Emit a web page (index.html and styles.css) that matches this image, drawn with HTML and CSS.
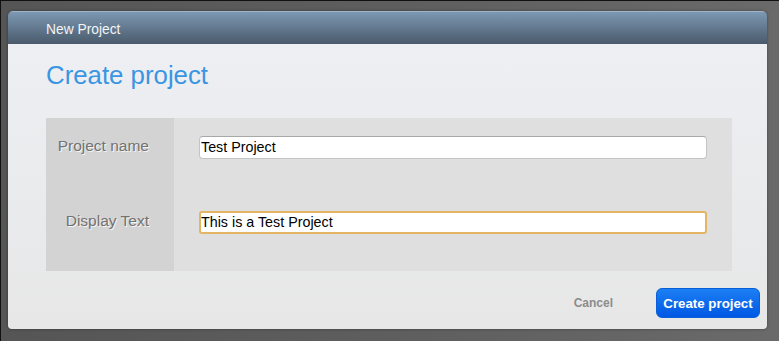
FILE: index.html
```html
<!DOCTYPE html>
<html lang="en">
<head>
  <meta charset="UTF-8" />
  <title>New Project</title>
  <link rel="stylesheet" href="styles.css">
</head>
<body>
  <div class="dialog">
    <div class="dialog-header">New Project</div>
    <div class="dialog-body">
      <h1>Create project</h1>
      <form class="form-panel">
        <label class="field-label" for="projectName">Project name</label>
        <div class="field"><input id="projectName" type="text" value="Test Project"></div>
        <label class="field-label" for="displayText">Display Text</label>
        <div class="field"><input id="displayText" class="focused" type="text" value="This is a Test Project"></div>
      </form>
      <div class="actions">
        <a href="#" class="cancel-btn">Cancel</a>
        <button class="create-btn">Create project</button>
      </div>
    </div>
  </div>
</body>
</html>
```

FILE: styles.css
```css
html, body {
  margin: 0;
  padding: 0;
  height: 100%;
}
body {
  background: linear-gradient(90deg, #555 0, #5e5e5e 50%, #6a6a6a 100%);
  border-top: 1px solid #111;
  border-left: 1px solid #111;
  box-sizing: border-box;
  font-family: 'Liberation Sans', Arial, sans-serif;
  overflow: hidden;
}
.dialog {
  margin: 10px 0 0 7px;
  width: 759px;
  height: 318px;
  border-radius: 5px 5px 4px 4px;
  overflow: hidden;
  display: flex;
  flex-direction: column;
  box-shadow: 0 0 3px rgba(0, 0, 0, 0.4);
}
.dialog-header {
  height: 33px;
  padding-left: 38px;
  line-height: 35px;
  font-size: 13.8px;
  color: #f2f4f6;
  background: linear-gradient(#7c98b3, #4a5a6b);
  border-top: 1px solid #9fb4c8;
  box-sizing: border-box;
}
.dialog-body {
  flex: 1;
  padding: 0 35px 0 38px;
  background: linear-gradient(#edeff3, #e7e7e7);
}
h1 {
  margin: 17px 0 0;
  font-size: 25.8px;
  font-weight: normal;
  line-height: 28px;
  color: #3a95e2;
}
.form-panel {
  margin: 29px 0 0;
  display: grid;
  grid-template-columns: 128px 1fr;
  grid-template-rows: 58px 92px;
  padding-bottom: 3px;
  background: linear-gradient(90deg, #d3d3d3 128px, #dfdfdf 128px);
}
.field-label {
  align-self: center;
  text-align: right;
  padding: 0 25px 3px 0;
  font-size: 15.5px;
  color: #727272;
  text-shadow: 1px 1px 0 #f4f4f4;
}
.field {
  align-self: center;
  padding: 0 25px;
}
.field input {
  display: block;
  width: 100%;
  height: 23px;
  box-sizing: border-box;
  margin: 0;
  padding: 0 1px;
  font-family: 'Liberation Sans', Arial, sans-serif;
  font-size: 14.3px;
  color: #000;
  background: #fff;
  border: 1px solid #c4c4c4;
  border-top-color: #a8a8a8;
  border-radius: 4px;
  outline: none;
}
.field input.focused {
  border: 2px solid #e3b565;
  border-radius: 3px;
  padding: 0;
}
.actions {
  display: flex;
  justify-content: flex-end;
  align-items: center;
  gap: 43px;
  margin: 17px -28px 0 0;
}
.cancel-btn {
  font-size: 12px;
  font-weight: bold;
  color: #8c8c8c;
  text-decoration: none;
}
.create-btn {
  height: 30px;
  width: 104px;
  padding: 0;
  font-family: 'Liberation Sans', Arial, sans-serif;
  font-size: 13.3px;
  font-weight: bold;
  color: #fff;
  background: linear-gradient(#1c7ff4, #0058e4);
  border: 1px solid #0a5fd6;
  border-radius: 6px;
}
```
